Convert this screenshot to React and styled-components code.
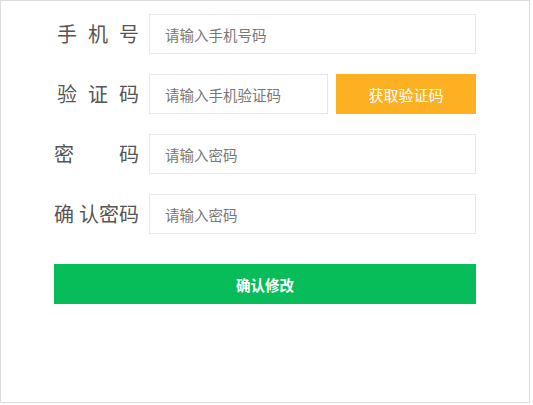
import React from 'react'
import styled, { createGlobalStyle } from 'styled-components'

const GlobalStyle = createGlobalStyle`
  body {
    margin: 0;
    background: #fff;
    font-family: "Noto Sans CJK SC", "Noto Sans", sans-serif;
  }
`

const fields = [
  { label: ['手', '机', '号'], gap: 11, placeholder: '请输入手机号码' },
  { label: ['验', '证', '码'], gap: 11, placeholder: '请输入手机验证码', code: true },
  { label: ['密', '码'], gap: 45, placeholder: '请输入密码', type: 'password' },
  { label: ['确', '认密码'], gap: 5, placeholder: '请输入密码', type: 'password' },
]

function App() {
  return (
    <>
      <GlobalStyle />
      <Panel>
        <Form>
          {fields.map((f, i) => (
            <Row key={i}>
              <Label $gap={f.gap}>
                {f.label.map((c) => <span key={c}>{c}</span>)}
              </Label>
              <Input type={f.type || 'text'} placeholder={f.placeholder} $short={f.code} />
              {f.code && <CodeButton>获取验证码</CodeButton>}
            </Row>
          ))}
          <Submit>确认修改</Submit>
        </Form>
      </Panel>
    </>
  )
}

export default App

const Panel = styled.div`
  width: 528px;
  height: 401px;
  border: 1px solid #dcdcdc;
`

const Form = styled.div`
  display: flex;
  flex-direction: column;
  gap: 20px;
  padding: 13px 0 0 53px;
`

const Row = styled.div`
  display: flex;
  align-items: center;
  height: 40px;
`

const Label = styled.div`
  width: 85px;
  padding-right: 10px;
  display: flex;
  justify-content: flex-end;
  gap: ${(p) => p.$gap}px;
  font-size: 20px;
  line-height: 40px;
  color: #555;
`

const Input = styled.input`
  box-sizing: border-box;
  width: ${(p) => (p.$short ? '179px' : '327px')};
  height: 40px;
  border: 1px solid #e6e6e6;
  padding: 0 0 0 15px;
  font-family: inherit;
  font-size: 14.5px;
  color: #333;
  outline: none;

  &::placeholder {
    color: #777;
  }
`

const CodeButton = styled.button`
  margin-left: 8px;
  width: 140px;
  height: 40px;
  border: none;
  background: #fdb022;
  color: #fff;
  font-family: inherit;
  font-size: 15px;
  cursor: pointer;
`

const Submit = styled.button`
  margin-top: 10px;
  width: 422px;
  height: 40px;
  border: none;
  background: #07bd5a;
  color: #fff;
  font-family: inherit;
  font-size: 14.5px;
  font-weight: bold;
  cursor: pointer;
`
